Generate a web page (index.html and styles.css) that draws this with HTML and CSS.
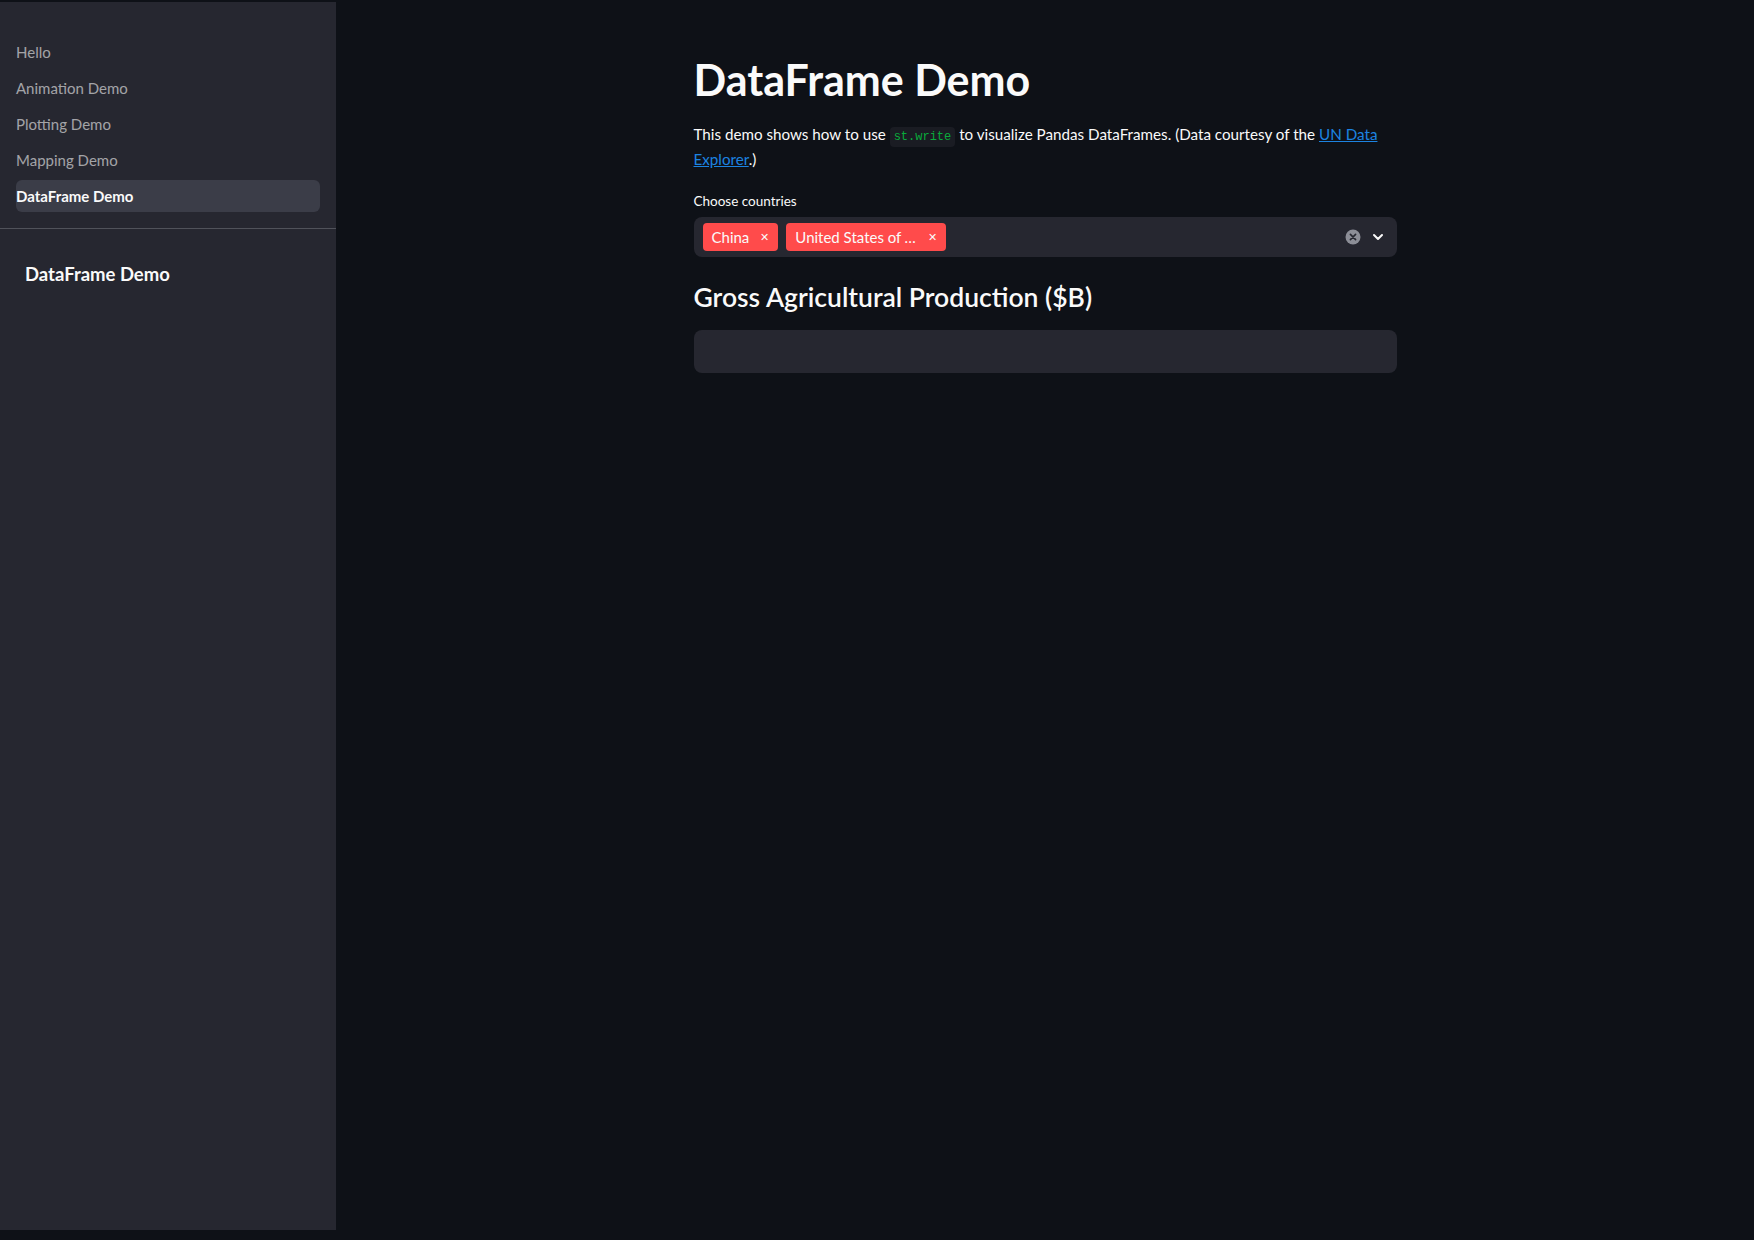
FILE: index.html
```html
<!DOCTYPE html>
<html>
<head>
<meta charset="utf-8">
<link rel="stylesheet" href="styles.css">
</head>
<body>
<div class="app">
  <aside class="sidebar">
    <nav class="nav">
      <a class="nav-item">Hello</a>
      <a class="nav-item">Animation Demo</a>
      <a class="nav-item">Plotting Demo</a>
      <a class="nav-item">Mapping Demo</a>
      <a class="nav-item active">DataFrame Demo</a>
    </nav>
    <div class="divider"></div>
    <div class="side-head">DataFrame Demo</div>
  </aside>
  <main class="main">
    <div class="block">
      <h1 class="title">DataFrame Demo</h1>
      <p class="para">This demo shows how to use <code class="code">st.write</code> to visualize Pandas DataFrames. (Data courtesy of the <a class="link">UN Data Explorer</a>.)</p>
      <div class="label">Choose countries</div>
      <div class="select">
        <div class="tags">
          <span class="tag"><span class="tag-text">China</span><span class="tag-x">&#x2715;</span></span>
          <span class="tag"><span class="tag-text long">United States of America</span><span class="tag-x">&#x2715;</span></span>
        </div>
        <div class="controls">
          <svg class="clear" width="16" height="16" viewBox="0 0 16 16"><circle cx="8" cy="8" r="7.5" fill="#8c8e97"/><path d="M5.4 5.4 L10.6 10.6 M10.6 5.4 L5.4 10.6" stroke="#262730" stroke-width="1.6" stroke-linecap="round"/></svg>
          <svg class="chev" width="14" height="14" viewBox="0 0 14 14"><path d="M3 5 L7 9 L11 5" fill="none" stroke="#fafafa" stroke-width="2" stroke-linecap="round" stroke-linejoin="round"/></svg>
        </div>
      </div>
      <h2 class="subtitle">Gross Agricultural Production ($B)</h2>
      <div class="frame"></div>
    </div>
  </main>
</div>
</body>
</html>
```
FILE: styles.css
```css
html, body {
  margin: 0;
  padding: 0;
  background: #0e1117;
  height: 1240px;
  overflow: hidden;
}
body {
  font-family: "Lato", "Noto Sans", sans-serif;
  color: #fafafa;
}
.app {
  display: flex;
  height: 1240px;
}
.sidebar {
  width: 336px;
  flex: none;
  background: #262730;
  margin-top: 2px;
  height: 1228px;
  box-sizing: border-box;
}
.nav {
  display: flex;
  flex-direction: column;
  gap: 4px;
  padding: 34px 16px 16px 16px;
}
.nav-item {
  display: flex;
  align-items: center;
  height: 32px;
  font-size: 15px;
  color: rgba(250, 250, 250, 0.6);
  border-radius: 6px;
}
.nav-item.active {
  background: #3b3d48;
  color: #fafafa;
  font-weight: 700;
}
.divider {
  height: 1px;
  background: #50525a;
}
.side-head {
  padding: 33px 0 0 25px;
  font-size: 18.5px;
  font-weight: 700;
  line-height: 24px;
}
.main {
  flex: 1;
  display: flex;
  justify-content: center;
}
.block {
  width: 703px;
  padding-top: 54px;
}
.title {
  margin: 0;
  font-size: 43px;
  font-weight: 700;
  line-height: 52px;
}
.para {
  margin: 16px 0 0 0;
  font-size: 15.2px;
  line-height: 25px;
}
.code {
  font-family: "Liberation Mono", monospace;
  font-size: 12px;
  line-height: 1;
  color: #09ab3b;
  background: #1a1c23;
  padding: 3px 4px;
  border-radius: 4px;
}
.link {
  color: #1c83e1;
  text-decoration: underline;
}
.label {
  margin-top: 19px;
  font-size: 13.5px;
  line-height: 20px;
}
.select {
  margin-top: 6px;
  height: 40px;
  background: #262730;
  border-radius: 8px;
  display: flex;
  align-items: center;
  justify-content: space-between;
  padding: 0 12px 0 9px;
  box-sizing: border-box;
}
.tags {
  display: flex;
  gap: 8px;
}
.tag {
  display: flex;
  align-items: center;
  height: 28px;
  background: #ff4b4b;
  border-radius: 4px;
  padding: 0 9px;
  font-size: 15px;
  gap: 11px;
}
.tag-text.long {
  max-width: 122px;
  white-space: nowrap;
  overflow: hidden;
  text-overflow: ellipsis;
}
.tag-x {
  font-size: 11px;
}
.controls {
  display: flex;
  align-items: center;
  gap: 10px;
}
.subtitle {
  margin: 23px 0 0 0;
  font-size: 26.5px;
  font-weight: 600;
  line-height: 34px;
}
.frame {
  margin-top: 16px;
  height: 43px;
  background: #262730;
  border-radius: 8px;
}
```
